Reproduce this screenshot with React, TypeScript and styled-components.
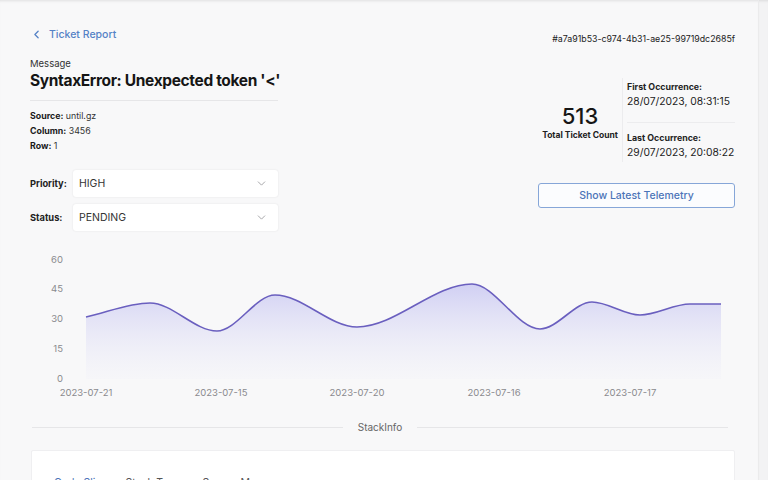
import React from "react";
import styled, { createGlobalStyle } from "styled-components";
import { ChevronDown, ChevronLeft } from "lucide-react";

const GlobalStyle = createGlobalStyle`
  html, body {
    margin: 0;
    padding: 0;
    height: 480px;
    overflow: hidden;
    background: #f7f7f8;
    font-family: Inter, "Liberation Sans", sans-serif;
    color: #1c1c1e;
  }
`;

const StyledPage = styled.div`
  display: flex;
  width: 768px;
  height: 480px;
  overflow: hidden;
`;

const StyledMain = styled.main`
  width: 758px;
  padding: 26px 23px 0 30px;
  box-sizing: border-box;
  background: #f8f8f9;
  box-shadow: inset 0 3px 3px -2px rgba(0, 0, 0, 0.1);
`;

const StyledSideStrip = styled.div`
  flex: 1;
  background: #f3f3f4;
  border-left: 1px solid #ebebec;
  box-shadow: inset 0 3px 3px -2px rgba(0, 0, 0, 0.1);
`;

const StyledTopRow = styled.div`
  display: flex;
  align-items: center;
  justify-content: space-between;
  height: 16px;
`;

const StyledBackLink = styled.a`
  display: flex;
  align-items: center;
  gap: 6px;
  font-size: 10.5px;
  font-weight: 500;
  color: #5582c6;
  text-decoration: none;
`;

const StyledTicketId = styled.span`
  font-size: 8.8px;
  color: #222;
  margin-top: 8px;
  white-space: nowrap;
`;

const StyledHeadGrid = styled.div`
  display: grid;
  grid-template-columns: 248px 1fr 197px;
  margin-top: 15px;
`;

const StyledLeftColumn = styled.section`
  display: flex;
  flex-direction: column;
`;

const StyledCaption = styled.div`
  font-size: 9.5px;
  line-height: 14px;
  color: #333;
`;

const StyledTitle = styled.h1`
  margin: 0;
  font-size: 15.5px;
  line-height: 20px;
  font-weight: 700;
  letter-spacing: -0.35px;
  white-space: nowrap;
  color: #151515;
`;

const StyledRule = styled.hr`
  width: 100%;
  margin: 9px 0 0;
  border: none;
  border-top: 1px solid #e6e6e8;
`;

const StyledInfoList = styled.div`
  margin-top: 7px;
  display: flex;
  flex-direction: column;
`;

const StyledInfoLine = styled.div`
  font-size: 8.8px;
  line-height: 15px;
  color: #333;

  b {
    color: #1a1a1a;
    font-weight: 700;
  }
`;

const StyledFieldList = styled.div`
  display: flex;
  flex-direction: column;
  gap: 7px;
  margin-top: 17px;
`;

const StyledField = styled.label`
  display: flex;
  align-items: center;
`;

const StyledFieldLabel = styled.span`
  width: 43px;
  font-size: 9.3px;
  font-weight: 700;
  color: #222;
`;

const StyledSelect = styled.div`
  flex: 1;
  display: flex;
  align-items: center;
  justify-content: space-between;
  height: 27px;
  padding: 0 10px 0 6px;
  background: #fff;
  border-radius: 3px;
  box-shadow: 0 0 2px rgba(0, 0, 0, 0.1);
  font-size: 10.5px;
  color: #333;
`;

const StyledRightColumn = styled.section`
  grid-column: 3;
  display: flex;
  flex-direction: column;
  padding-top: 21px;
`;

const StyledStats = styled.div`
  display: grid;
  grid-template-columns: 85px 1fr;
  height: 84px;
`;

const StyledCount = styled.div`
  display: flex;
  flex-direction: column;
  align-items: center;
  justify-content: center;
  padding-top: 4px;
  border-right: 1px solid #ececee;
`;

const StyledCountNumber = styled.div`
  font-size: 22px;
  line-height: 26px;
  font-weight: 500;
  color: #161616;
`;

const StyledCountLabel = styled.div`
  font-size: 8.5px;
  line-height: 12px;
  font-weight: 700;
  white-space: nowrap;
  color: #222;
`;

const StyledOccurrences = styled.div`
  display: flex;
  flex-direction: column;
  padding-left: 4px;
  padding-top: 2px;
`;

const StyledOccurrence = styled.div<{ $divided?: boolean }>`
  padding-top: ${(p) => (p.$divided ? "8px" : "0")};
  margin-top: ${(p) => (p.$divided ? "14px" : "0")};
  border-top: ${(p) => (p.$divided ? "1px solid #ececee" : "none")};
`;

const StyledOccurrenceLabel = styled.div`
  font-size: 8.8px;
  line-height: 14px;
  font-weight: 700;
  white-space: nowrap;
  color: #222;
`;

const StyledOccurrenceValue = styled.div`
  font-size: 10.3px;
  line-height: 14px;
  white-space: nowrap;
  color: #222;
`;

const StyledTelemetryButton = styled.button`
  margin-top: 21px;
  height: 25px;
  border: 1px solid #86a6d8;
  border-radius: 3px;
  background: #fbfcfe;
  font-family: inherit;
  font-size: 10.5px;
  font-weight: 500;
  color: #4c74b8;
`;

const StyledChart = styled.svg`
  display: block;
  margin-top: 19px;
`;

const StyledDivider = styled.div`
  display: flex;
  align-items: center;
  gap: 15px;
  margin: 20px 7px 0 2px;
  font-size: 10px;
  color: #666;

  &::before,
  &::after {
    content: "";
    flex: 1;
    border-top: 1px solid #e6e6e8;
  }
`;

const StyledCard = styled.div`
  margin-top: 17px;
  margin-left: 1px;
  height: 60px;
  background: #fff;
  border: 1px solid #efeff1;
  border-radius: 2px;
  display: flex;
  gap: 18px;
  padding: 25px 22px 0;
`;

const StyledTab = styled.span<{ $active?: boolean }>`
  font-size: 10.5px;
  color: ${(p) => (p.$active ? "#4c74b8" : "#555")};
`;

type Pt = [number, number];

const monotonePath = (pts: Pt[]): string => {
  const n = pts.length;
  const s: number[] = [];
  for (let i = 0; i < n - 1; i++) {
    s.push((pts[i + 1][1] - pts[i][1]) / (pts[i + 1][0] - pts[i][0]));
  }
  const t: number[] = pts.map((_, i) => {
    if (i === 0) return s[0];
    if (i === n - 1) return s[n - 2];
    const s0 = s[i - 1];
    const s1 = s[i];
    if (s0 * s1 <= 0) return 0;
    const h0 = pts[i][0] - pts[i - 1][0];
    const h1 = pts[i + 1][0] - pts[i][0];
    const p = (s0 * h1 + s1 * h0) / (h0 + h1);
    return (Math.sign(s0) + Math.sign(s1)) * Math.min(Math.abs(s0), Math.abs(s1), 0.5 * Math.abs(p));
  });
  let d = `M${pts[0][0]},${pts[0][1]}`;
  for (let i = 0; i < n - 1; i++) {
    const [x0, y0] = pts[i];
    const [x1, y1] = pts[i + 1];
    const h = (x1 - x0) / 3;
    d += ` C${x0 + h},${y0 + t[i] * h} ${x1 - h},${y1 - t[i + 1] * h} ${x1},${y1}`;
  }
  return d;
};

// pixel points of the line inside the chart box
const points: Pt[] = [
  [56, 67],
  [120, 53],
  [187, 81],
  [245, 45],
  [327, 77],
  [442, 34],
  [510, 79],
  [562, 52],
  [610, 65],
  [660, 54],
  [691, 54],
];

const yTicks = [
  { label: "60", y: 10 },
  { label: "45", y: 39 },
  { label: "30", y: 69 },
  { label: "15", y: 99 },
  { label: "0", y: 129 },
];

const xTicks = [
  { label: "2023-07-21", x: 56 },
  { label: "2023-07-15", x: 191 },
  { label: "2023-07-20", x: 327 },
  { label: "2023-07-16", x: 464 },
  { label: "2023-07-17", x: 600 },
];

const TicketChart: React.FC = () => {
  const line = monotonePath(points);
  const area = `${line} L691,129 L56,129 Z`;
  return (
    <StyledChart width={705} height={151} viewBox="0 0 705 151">
      <defs>
        <linearGradient id="areaFill" x1="0" y1="0" x2="0" y2="1">
          <stop offset="0%" stopColor="#c9c8f2" stopOpacity={0.85} />
          <stop offset="100%" stopColor="#eeeef8" stopOpacity={0.2} />
        </linearGradient>
      </defs>
      {yTicks.map((t) => (
        <text
          key={t.label}
          x={33}
          y={t.y}
          textAnchor="end"
          dominantBaseline="middle"
          fontSize={9.5}
          fill="#8a8a8e"
          fontFamily="Inter, sans-serif"
        >
          {t.label}
        </text>
      ))}
      <path d={area} fill="url(#areaFill)" />
      <path d={line} fill="none" stroke="#6a5fbf" strokeWidth={1.6} />
      {xTicks.map((t) => (
        <text
          key={t.label}
          x={t.x}
          y={143}
          textAnchor="middle"
          dominantBaseline="middle"
          fontSize={9.5}
          fill="#8a8a8e"
          fontFamily="Inter, sans-serif"
        >
          {t.label}
        </text>
      ))}
    </StyledChart>
  );
};

const App: React.FC = () => {
  return (
    <StyledPage>
      <GlobalStyle />
      <StyledMain>
        <StyledTopRow>
          <StyledBackLink href="#">
            <ChevronLeft size={13} strokeWidth={2.4} />
            Ticket Report
          </StyledBackLink>
          <StyledTicketId>#a7a91b53-c974-4b31-ae25-99719dc2685f</StyledTicketId>
        </StyledTopRow>

        <StyledHeadGrid>
          <StyledLeftColumn>
            <StyledCaption>Message</StyledCaption>
            <StyledTitle>SyntaxError: Unexpected token '&lt;'</StyledTitle>
            <StyledRule />
            <StyledInfoList>
              <StyledInfoLine>
                <b>Source:</b> until.gz
              </StyledInfoLine>
              <StyledInfoLine>
                <b>Column:</b> 3456
              </StyledInfoLine>
              <StyledInfoLine>
                <b>Row:</b> 1
              </StyledInfoLine>
            </StyledInfoList>
            <StyledFieldList>
              <StyledField>
                <StyledFieldLabel>Priority:</StyledFieldLabel>
                <StyledSelect>
                  HIGH
                  <ChevronDown size={13} color="#9a9a9e" strokeWidth={1.6} />
                </StyledSelect>
              </StyledField>
              <StyledField>
                <StyledFieldLabel>Status:</StyledFieldLabel>
                <StyledSelect>
                  PENDING
                  <ChevronDown size={13} color="#9a9a9e" strokeWidth={1.6} />
                </StyledSelect>
              </StyledField>
            </StyledFieldList>
          </StyledLeftColumn>

          <StyledRightColumn>
            <StyledStats>
              <StyledCount>
                <StyledCountNumber>513</StyledCountNumber>
                <StyledCountLabel>Total Ticket Count</StyledCountLabel>
              </StyledCount>
              <StyledOccurrences>
                <StyledOccurrence>
                  <StyledOccurrenceLabel>First Occurrence:</StyledOccurrenceLabel>
                  <StyledOccurrenceValue>28/07/2023, 08:31:15</StyledOccurrenceValue>
                </StyledOccurrence>
                <StyledOccurrence $divided>
                  <StyledOccurrenceLabel>Last Occurrence:</StyledOccurrenceLabel>
                  <StyledOccurrenceValue>29/07/2023, 20:08:22</StyledOccurrenceValue>
                </StyledOccurrence>
              </StyledOccurrences>
            </StyledStats>
            <StyledTelemetryButton>Show Latest Telemetry</StyledTelemetryButton>
          </StyledRightColumn>
        </StyledHeadGrid>

        <TicketChart />

        <StyledDivider>StackInfo</StyledDivider>

        <StyledCard>
          <StyledTab $active>Code Slice</StyledTab>
          <StyledTab>Stack Trace</StyledTab>
          <StyledTab>Source Map</StyledTab>
        </StyledCard>
      </StyledMain>
      <StyledSideStrip />
    </StyledPage>
  );
};

export default App;
